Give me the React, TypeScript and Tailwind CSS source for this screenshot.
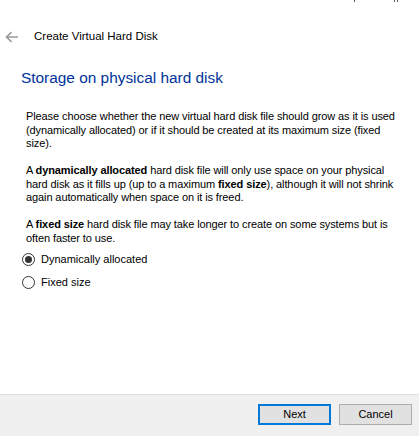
import React from "react";

function BackArrow() {
  return (
    <svg width="14" height="12" viewBox="0 0 14 12" className="block">
      <path d="M13 6H1.8M6.5 1.2L1.5 6l5 4.8" fill="none" stroke="#9a9a9a" strokeWidth="1.6" />
    </svg>
  );
}

function Radio({ checked, label }: { checked?: boolean; label: string }) {
  return (
    <div className="flex items-center h-[16px]">
      <span className="ml-[22px] w-[13px] h-[13px] rounded-full border border-[#333] flex items-center justify-center bg-white">
        {checked && <span className="w-[7px] h-[7px] rounded-full bg-[#333]" />}
      </span>
      <span className="ml-[6px] text-[#000]">{label}</span>
    </div>
  );
}

export default function App() {
  return (
    <div
      className="relative w-[419px] h-[436px] bg-white flex flex-col text-[11px] text-black overflow-hidden"
      style={{ fontFamily: '"Liberation Sans", Arial, sans-serif' }}
    >
      {/* leftover of the window caption buttons */}
      <span className="absolute left-[354px] top-0 w-[1px] h-[2px] bg-[#555]" />
      <span className="absolute left-[394px] top-0 w-[1px] h-[2px] bg-[#555]" />
      <span className="absolute left-[397px] top-0 w-[1px] h-[2px] bg-[#555]" />

      <div className="flex items-center h-[18px] mt-[28px]">
        <span className="ml-[5px]">
          <BackArrow />
        </span>
        <span className="ml-[15px] text-[11.5px]">Create Virtual Hard Disk</span>
      </div>

      <div className="mt-[22px] ml-[21px] text-[15.4px] leading-[20px] text-[#003399]">
        Storage on physical hard disk
      </div>

      <div className="ml-[26px] mt-[22px] leading-[13.5px] tracking-[-0.1px]">
        <p>
          <span className="block whitespace-nowrap">Please choose whether the new virtual hard disk file should grow as it is used</span>
          <span className="block whitespace-nowrap">(dynamically allocated) or if it should be created at its maximum size (fixed</span>
          <span className="block whitespace-nowrap">size).</span>
        </p>
        <p className="mt-[13.5px]">
          <span className="block whitespace-nowrap">
            A <b>dynamically allocated</b> hard disk file will only use space on your physical
          </span>
          <span className="block whitespace-nowrap">
            hard disk as it fills up (up to a maximum <b>fixed size</b>), although it will not shrink
          </span>
          <span className="block whitespace-nowrap">again automatically when space on it is freed.</span>
        </p>
        <p className="mt-[13.5px]">
          <span className="block whitespace-nowrap">
            A <b>fixed size</b> hard disk file may take longer to create on some systems but is
          </span>
          <span className="block whitespace-nowrap">often faster to use.</span>
        </p>
      </div>

      <div className="mt-[6px] flex flex-col gap-[7px]">
        <Radio checked label="Dynamically allocated" />
        <Radio label="Fixed size" />
      </div>

      <div className="flex-1" />

      <div className="h-[42px] bg-[#f0f0f0] border-t border-[#dfdfdf] flex items-start justify-end pt-[9px] pr-[7px] gap-[8px]">
        <button className="w-[73px] h-[21px] bg-[#e1e1e1] border-2 border-[#0078d7] text-[11px] leading-none">
          Next
        </button>
        <button className="w-[73px] h-[21px] bg-[#e1e1e1] border border-[#adadad] text-[11px] leading-none">
          Cancel
        </button>
      </div>
    </div>
  );
}
